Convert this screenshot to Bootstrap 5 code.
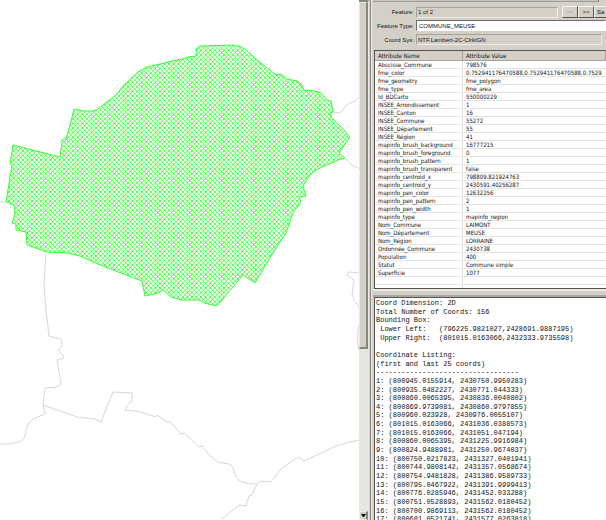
<!DOCTYPE html>
<html lang="fr">
<head>
<meta charset="utf-8">
<meta name="viewport" content="width=device-width, initial-scale=1">
<title>COMMUNE_MEUSE</title>
<link rel="stylesheet" href="https://cdn.jsdelivr.net/npm/bootstrap@5.3.0/dist/css/bootstrap.min.css">
<style>
:root { --face: #d4d0c8; --shade: #868580; --dark: #55534f; --track: #e7e6e2; }
body { font-family: "Liberation Sans", Arial, sans-serif; font-size: 6px; line-height: 8px; color: #111; background: var(--face); }
.viewer { display: grid; grid-template-columns: minmax(0, 359fr) 10px 4px minmax(0, 233fr); }
.map-pane svg { display: block; width: 100%; height: 100%; }
.scroller { background: var(--track); border-top: 2px solid var(--shade); border-right: 1px solid #eceae6; }
.thumb { flex: 0 0 67%; background: var(--face); border: 1px solid #eae8e3; border-right: 2px solid var(--shade); border-bottom: 2px solid var(--shade); }
.step { height: 9px; background: var(--face); border: 1px solid #f0eeea; border-right: 2px solid var(--shade); }
.splitter { background: var(--face); box-shadow: inset 1px 0 var(--face), inset 2px 0 var(--shade), inset 3px 0 #eceae6; }
.upper-edge { height: 2px; margin-right: 7px; background: #c8c5bd; border-bottom: 1px solid #a09d97; border-right: 1px solid #777; }
.props { display: grid; grid-template-columns: 41px minmax(0, 1fr); column-gap: 2px; row-gap: 2px; padding-top: 4px; }
.props label { text-align: right; line-height: 12px; white-space: nowrap; }
.field { width: 100%; min-width: 0; height: 11px; padding: 0 0 0 1px; border: 1px solid #a5a29b; border-right-color: #eeece8; border-bottom-color: #eeece8; border-radius: 0; background: var(--face); color: #111; font-size: 6px; line-height: 9px; }
.field-edit { background: #fff; border-color: #706e69 #fff #fff #706e69; padding-left: 2px; }
.tool { flex: 0 0 16px; height: 12px; padding: 0; border: 1px solid #f4f3f0; border-right-color: var(--dark); border-bottom-color: var(--dark); background: var(--face); font-size: 6px; line-height: 9px; color: #111; }
.tool:disabled { color: #99968f; }
.tool-cut { flex: 0 0 12px; border-right: 0; padding-left: 2px; text-align: left; }
.sheet { height: 239px; margin-left: 1px; background: #fff; border: 1px solid var(--dark); border-right: 0; overflow: hidden; }
.attrs { width: 100%; table-layout: fixed; border-collapse: separate; border-spacing: 0; font-family: "DejaVu Sans Condensed", "DejaVu Sans", sans-serif; }
.attrs th, .attrs td { height: 8px; padding: 0 0 0 3px; border-bottom: 1px solid #e4e3df; white-space: nowrap; line-height: 7px; font-weight: 400; }
.attrs th { height: 10px; background: var(--face); line-height: 9px; border-bottom-color: #a5a29b; border-right: 1px solid #a5a29b; }
.attrs td:first-child { border-right: 1px solid #dddcd8; }
.col-name { width: 88px; }
.divider { height: 8px; border-top: 2px solid #eceae6; border-bottom: 2px solid #aaa8a2; }
.report { margin-left: 1px; background: #fff; border: 1px solid var(--dark); border-width: 1px 0 0 1px; }
.report-lines { display: grid; grid-auto-rows: minmax(0, 1fr); height: calc(100% + 3px); margin-top: 1px; padding-left: 1px; font-family: "Liberation Mono", "Courier New", monospace; font-size: 7px; white-space: pre; }
</style>
<script src="https://cdn.jsdelivr.net/npm/bootstrap@5.3.0/dist/js/bootstrap.bundle.min.js"></script>
</head>
<body>
<main class="viewer vh-100 overflow-hidden">
  <section class="map-pane bg-white overflow-hidden" aria-label="Map">
    <svg viewBox="0 0 359 520" preserveAspectRatio="xMinYMin slice" role="img" aria-label="Laimont">
      <defs>
        <pattern id="hatch" width="4.57" height="4.57" patternUnits="userSpaceOnUse" viewBox="0 0 8 8">
          <path d="M-1-1L9 9M-1 9L9-1" stroke="#0f0" stroke-width="1.25" fill="none"/>
        </pattern>
      </defs>
      <g fill="none" stroke="#d6d6d6" stroke-width="1" stroke-linejoin="round">
        <path d="M0 202H6M333 112L340 113L348 104L355 101L360 96M345 158L352 165L360 169"/>
        <path d="M360 273L348 272L347 275L354 280L352 296L360 309M360 321Q355 337 360 354"/>
        <path d="M46 253L44 285L46 310L49 336L61 339L62 346L58 350L63 355L64 358L57 360L61 384Q59 387 56 387L45 388L43 405L45 414L33 419Q27 423 26 431Q25 441 19 442Q8 445 0 444"/>
        <path d="M43 405L77 417L95 419L101 422L113 392L132 393V401Q126 405 125 410Q142 411 155 417L157 415L167 422L170 422L181 434L184 433L199 447L202 446Q210 457 218 462L229 464Q234 466 235 475Q239 485 257 484L260 481L271 482L280 470L284 467L292 461Q299 456 301 459L304 461L315 456L336 446Q347 442 360 440"/>
        <path d="M257 484L252 495L249 496L246 506L239 505L222 519"/>
      </g>
      <path fill="url(#hatch)" stroke="#3f3" stroke-width="1" stroke-linejoin="round" d="M13 145L60 157L62 143L61 141L63 139H66L70 125L74 109L83 111H93L98 109L117 94L123 86L138 72L147 67L160 64L172 61L183 59L188 57L196 56V49L200 46L233 45L241 47L246 50L262 64L275 74L278 75L281 74L287 79L297 81L301 84L304 90L315 91L321 93L327 100L331 101L333 112L330 113L331 117L343 129L350 137L339 153L345 158L338 160L316 170L310 175L303 186L306 196L299 197L301 202L293 213L286 233L268 261L255 283L243 275L231 289L217 306L204 303L200 300L181 300L171 297L163 290L158 293L145 296L142 281L100 265L80 256L68 253L47 252L27 245L26 232L16 230V224L12 223L15 214L14 205L6 202L12 165L10 164Z"/>
    </svg>
  </section>

  <div class="scroller d-flex flex-column justify-content-between">
    <div class="thumb"></div>
    <button class="step d-flex align-items-center justify-content-center p-0" type="button" aria-label="Scroll down">
      <svg width="5" height="3" viewBox="0 0 5 3" aria-hidden="true"><path d="M0 0H5L3 3H2Z" fill="#111"/></svg>
    </button>
  </div>
  <div class="splitter"></div>

  <section class="d-flex flex-column overflow-hidden" aria-label="Feature information">
    <div class="upper-edge flex-shrink-0"></div>
    <form class="props flex-shrink-0">
      <label for="feature">Feature:</label>
      <div class="d-flex align-items-center">
        <input id="feature" class="field me-1 flex-fill" value="1 of 2" readonly>
        <button class="tool" type="button" disabled>&lt;&lt;</button>
        <button class="tool" type="button">&gt;&gt;</button>
        <button class="tool tool-cut" type="button">Sa</button>
      </div>
      <label for="ftype">Feature Type:</label>
      <input id="ftype" class="field field-edit" value="COMMUNE_MEUSE">
      <label for="csys">Coord Sys:</label>
      <div class="pe-1"><input id="csys" class="field d-block" value="NTF.Lambert-2C-ClrkIGN" readonly></div>
    </form>
    <div class="sheet flex-shrink-0 mt-1">
      <table class="attrs">
        <colgroup><col class="col-name"><col></colgroup>
        <thead><tr><th scope="col">Attribute Name</th><th scope="col">Attribute Value</th></tr></thead>
        <tbody>
          <tr><td>Abscisse_Commune</td><td>798576</td></tr>
          <tr><td>fme_color</td><td>0.752941176470588,0.752941176470588,0.7529</td></tr>
          <tr><td>fme_geometry</td><td>fme_polygon</td></tr>
          <tr><td>fme_type</td><td>fme_area</td></tr>
          <tr><td>Id_BDCarto</td><td>550000229</td></tr>
          <tr><td>INSEE_Arrondissement</td><td>1</td></tr>
          <tr><td>INSEE_Canton</td><td>16</td></tr>
          <tr><td>INSEE_Commune</td><td>55272</td></tr>
          <tr><td>INSEE_Département</td><td>55</td></tr>
          <tr><td>INSEE_Région</td><td>41</td></tr>
          <tr><td>mapinfo_brush_background</td><td>16777215</td></tr>
          <tr><td>mapinfo_brush_foreground</td><td>0</td></tr>
          <tr><td>mapinfo_brush_pattern</td><td>1</td></tr>
          <tr><td>mapinfo_brush_transparent</td><td>false</td></tr>
          <tr><td>mapinfo_centroid_x</td><td>798809.821924763</td></tr>
          <tr><td>mapinfo_centroid_y</td><td>2430591.40256287</td></tr>
          <tr><td>mapinfo_pen_color</td><td>12632256</td></tr>
          <tr><td>mapinfo_pen_pattern</td><td>2</td></tr>
          <tr><td>mapinfo_pen_width</td><td>1</td></tr>
          <tr><td>mapinfo_type</td><td>mapinfo_region</td></tr>
          <tr><td>Nom_Commune</td><td>LAIMONT</td></tr>
          <tr><td>Nom_Département</td><td>MEUSE</td></tr>
          <tr><td>Nom_Région</td><td>LORRAINE</td></tr>
          <tr><td>Ordonnée_Commune</td><td>2430738</td></tr>
          <tr><td>Population</td><td>400</td></tr>
          <tr><td>Statut</td><td>Commune simple</td></tr>
          <tr><td>Superficie</td><td>1077</td></tr>
          <tr><td></td><td></td></tr>
          <tr><td></td><td></td></tr>
        </tbody>
      </table>
    </div>
    <div class="divider flex-shrink-0"></div>
    <div class="report flex-fill overflow-hidden">
      <div class="report-lines">
        <div>Coord Dimension: 2D</div>
        <div>Total Number of Coords: 156</div>
        <div>Bounding Box:</div>
        <div> Lower Left:   (796225.9821027,2428691.9887195)</div>
        <div> Upper Right:  (801015.0163066,2432333.9735598)</div>
        <div></div>
        <div>Coordinate Listing:</div>
        <div>(first and last 25 coords)</div>
        <div>----------------------------------</div>
        <div>1: (800945.0155914, 2430750.9950283)</div>
        <div>2: (800935.0482227, 2430771.044333)</div>
        <div>3: (800860.0065395, 2430836.0040802)</div>
        <div>4: (800869.9739081, 2430860.9797855)</div>
        <div>5: (800960.023928, 2430976.0055107)</div>
        <div>6: (801015.0163066, 2431036.0388573)</div>
        <div>7: (801015.0163066, 2431051.047194)</div>
        <div>8: (800860.0065395, 2431225.9916984)</div>
        <div>9: (800824.9488981, 2431250.9674037)</div>
        <div>10: (800750.0217823, 2431327.0401941)</div>
        <div>11: (800744.9808142, 2431357.0568674)</div>
        <div>12: (800754.9481828, 2431386.9589733)</div>
        <div>13: (800795.0467922, 2431391.9999413)</div>
        <div>14: (800776.0285946, 2431452.033288)</div>
        <div>15: (800751.0528893, 2431562.0180452)</div>
        <div>16: (800700.9869113, 2431562.0180452)</div>
        <div>17: (800681.0521741, 2431577.0263818)</div>
      </div>
    </div>
  </section>
</main>
</body>
</html>
